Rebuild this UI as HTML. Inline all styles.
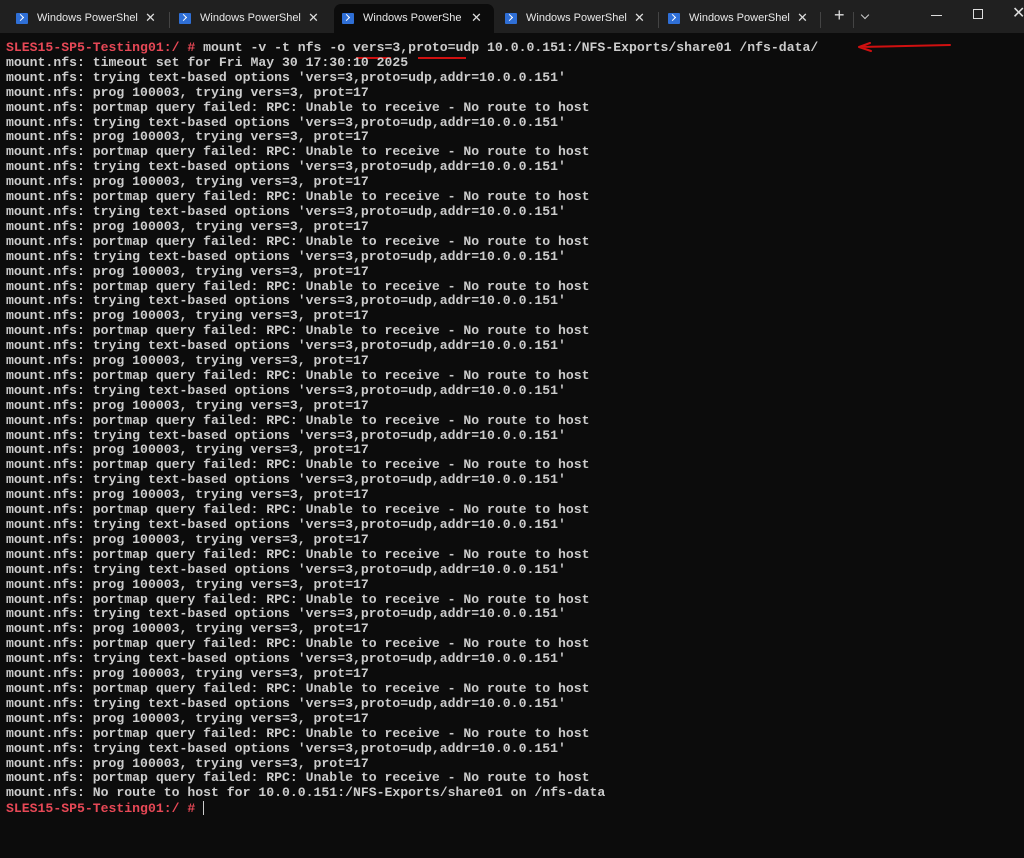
<!DOCTYPE html>
<html><head><meta charset="utf-8"><style>
html,body{margin:0;padding:0;width:1024px;height:858px;overflow:hidden;background:#0c0c0c;}
.bar{position:absolute;left:0;top:0;width:1024px;height:33px;background:#202020;}
.tab{position:absolute;top:4px;height:29px;width:160px;font:11px "Liberation Sans",sans-serif;color:#e8e8e8;}
.tab.act{background:#0c0c0c;border-radius:7px 7px 0 0;}
.tab .ic{position:absolute;left:8px;top:9px;width:12px;height:11px;background:#2f6fd6;border-radius:1px;}
.tab .ic:after{content:"";position:absolute;left:2px;top:2px;width:4px;height:4px;border-right:1.5px solid #fff;border-bottom:1.5px solid #fff;transform:rotate(-45deg);}
.tab .t{position:absolute;left:29px;top:8px;white-space:nowrap;}
.tab .x{position:absolute;left:137px;top:6px;font-size:13px;color:#ddd;}
.sep{position:absolute;top:12px;width:1px;height:16px;background:#444;}
pre{position:absolute;left:6px;top:41px;margin:0;font:bold 13.15px/14.9px "Liberation Mono",monospace;color:#cccccc;}
.r{color:#e74856;}
.u{position:absolute;height:2px;background:#d01010;}
</style></head><body>
<div class="bar"></div>
<div class="tab" style="left:8px"><span class="ic"></span><span class="t">Windows PowerShel</span><span class="x">✕</span></div>
<div class="sep" style="left:169px"></div>
<div class="tab" style="left:171px"><span class="ic"></span><span class="t">Windows PowerShel</span><span class="x">✕</span></div>
<div class="tab act" style="left:334px"><span class="ic"></span><span class="t">Windows PowerShe</span><span class="x">✕</span></div>
<div class="tab" style="left:497px"><span class="ic"></span><span class="t">Windows PowerShel</span><span class="x">✕</span></div>
<div class="sep" style="left:658px"></div>
<div class="tab" style="left:660px"><span class="ic"></span><span class="t">Windows PowerShel</span><span class="x">✕</span></div>
<div class="sep" style="left:820px"></div>
<div style="position:absolute;left:834px;top:5px;color:#ddd;font:18px 'Liberation Sans',sans-serif">+</div>
<div class="sep" style="left:853px"></div>
<div style="position:absolute;left:862px;top:12px;width:5px;height:5px;border-right:1.3px solid #ccc;border-bottom:1.3px solid #ccc;transform:rotate(45deg)"></div>
<div style="position:absolute;left:931px;top:15px;width:11px;height:1px;background:#ddd"></div>
<div style="position:absolute;left:973px;top:9px;width:8px;height:8px;border:1px solid #ddd"></div>
<div style="position:absolute;left:1012px;top:3px;color:#ddd;font:16px 'Liberation Sans',sans-serif">✕</div>
<div class="u" style="left:356px;top:57px;width:35px"></div>
<div class="u" style="left:418px;top:57px;width:48px"></div>
<svg style="position:absolute;left:855px;top:40px" width="100" height="16"><path d="M4 7 L95 5 M4 7 L15 3 M4 7 L16 11" stroke="#d01010" stroke-width="2" fill="none" stroke-linecap="round"/></svg>
<pre><span class="r">SLES15-SP5-Testing01:/ #</span> mount -v -t nfs -o vers=3,proto=udp 10.0.0.151:/NFS-Exports/share01 /nfs-data/
mount.nfs: timeout set for Fri May 30 17:30:10 2025
mount.nfs: trying text-based options 'vers=3,proto=udp,addr=10.0.0.151'
mount.nfs: prog 100003, trying vers=3, prot=17
mount.nfs: portmap query failed: RPC: Unable to receive - No route to host
mount.nfs: trying text-based options 'vers=3,proto=udp,addr=10.0.0.151'
mount.nfs: prog 100003, trying vers=3, prot=17
mount.nfs: portmap query failed: RPC: Unable to receive - No route to host
mount.nfs: trying text-based options 'vers=3,proto=udp,addr=10.0.0.151'
mount.nfs: prog 100003, trying vers=3, prot=17
mount.nfs: portmap query failed: RPC: Unable to receive - No route to host
mount.nfs: trying text-based options 'vers=3,proto=udp,addr=10.0.0.151'
mount.nfs: prog 100003, trying vers=3, prot=17
mount.nfs: portmap query failed: RPC: Unable to receive - No route to host
mount.nfs: trying text-based options 'vers=3,proto=udp,addr=10.0.0.151'
mount.nfs: prog 100003, trying vers=3, prot=17
mount.nfs: portmap query failed: RPC: Unable to receive - No route to host
mount.nfs: trying text-based options 'vers=3,proto=udp,addr=10.0.0.151'
mount.nfs: prog 100003, trying vers=3, prot=17
mount.nfs: portmap query failed: RPC: Unable to receive - No route to host
mount.nfs: trying text-based options 'vers=3,proto=udp,addr=10.0.0.151'
mount.nfs: prog 100003, trying vers=3, prot=17
mount.nfs: portmap query failed: RPC: Unable to receive - No route to host
mount.nfs: trying text-based options 'vers=3,proto=udp,addr=10.0.0.151'
mount.nfs: prog 100003, trying vers=3, prot=17
mount.nfs: portmap query failed: RPC: Unable to receive - No route to host
mount.nfs: trying text-based options 'vers=3,proto=udp,addr=10.0.0.151'
mount.nfs: prog 100003, trying vers=3, prot=17
mount.nfs: portmap query failed: RPC: Unable to receive - No route to host
mount.nfs: trying text-based options 'vers=3,proto=udp,addr=10.0.0.151'
mount.nfs: prog 100003, trying vers=3, prot=17
mount.nfs: portmap query failed: RPC: Unable to receive - No route to host
mount.nfs: trying text-based options 'vers=3,proto=udp,addr=10.0.0.151'
mount.nfs: prog 100003, trying vers=3, prot=17
mount.nfs: portmap query failed: RPC: Unable to receive - No route to host
mount.nfs: trying text-based options 'vers=3,proto=udp,addr=10.0.0.151'
mount.nfs: prog 100003, trying vers=3, prot=17
mount.nfs: portmap query failed: RPC: Unable to receive - No route to host
mount.nfs: trying text-based options 'vers=3,proto=udp,addr=10.0.0.151'
mount.nfs: prog 100003, trying vers=3, prot=17
mount.nfs: portmap query failed: RPC: Unable to receive - No route to host
mount.nfs: trying text-based options 'vers=3,proto=udp,addr=10.0.0.151'
mount.nfs: prog 100003, trying vers=3, prot=17
mount.nfs: portmap query failed: RPC: Unable to receive - No route to host
mount.nfs: trying text-based options 'vers=3,proto=udp,addr=10.0.0.151'
mount.nfs: prog 100003, trying vers=3, prot=17
mount.nfs: portmap query failed: RPC: Unable to receive - No route to host
mount.nfs: trying text-based options 'vers=3,proto=udp,addr=10.0.0.151'
mount.nfs: prog 100003, trying vers=3, prot=17
mount.nfs: portmap query failed: RPC: Unable to receive - No route to host
mount.nfs: No route to host for 10.0.0.151:/NFS-Exports/share01 on /nfs-data
<span class="r">SLES15-SP5-Testing01:/ #</span> <span style="display:inline-block;width:1px;height:14px;background:#ccc;vertical-align:-3px"></span></pre>
</body></html>
